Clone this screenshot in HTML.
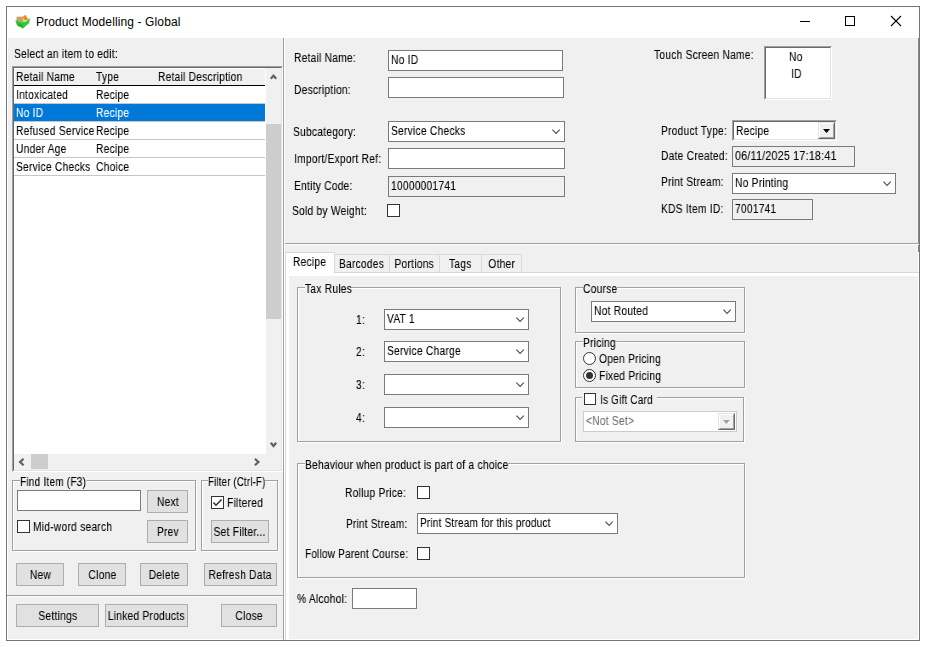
<!DOCTYPE html>
<html><head><meta charset="utf-8"><style>
html,body{margin:0;padding:0;background:#fff;width:926px;height:647px;overflow:hidden}
body{position:relative;font-family:"Liberation Sans",sans-serif}
.a{position:absolute;box-sizing:border-box}
.t{position:absolute;font-size:12px;line-height:14px;white-space:pre;transform:scaleX(0.85);letter-spacing:0.3px;transform-origin:0 0;will-change:transform;-webkit-text-stroke:0.1px currentColor}
.tc{position:absolute;font-size:12px;line-height:14px;white-space:pre;text-align:center}
.tc i{font-style:normal;display:inline-block;transform:scaleX(0.85);letter-spacing:0.3px;will-change:transform;-webkit-text-stroke:0.1px currentColor}
</style></head><body>

<div class="a" style="left:6px;top:6px;width:914px;height:635px;border:1px solid #777;background:#fff"></div>
<div class="a" style="left:8px;top:38px;width:910px;height:601px;background:#f0f0f0"></div>
<div class="a" style="left:918px;top:38px;width:1px;height:206px;background:#8a8a8a"></div>
<div class="a" style="left:918px;top:245px;width:1px;height:7px;background:#8a8a8a"></div>
<svg class="a" style="left:12px;top:12px" width="22" height="20" viewBox="0 0 22 20"><path d="M4.5 4.8 L11 4.6 L11.8 10.5 L4.5 9 Z" fill="#c9a36a"/><path d="M11 4.8 L13.5 2.8 L15 5.5 L16.5 7 L14 8.8 L11.5 7.5 Z" fill="#f28a12"/><path d="M11.5 8 L14 8.5 L14 10.5 L12 10.5 Z" fill="#d8e4f0"/><path d="M3.3 8.2 L10.8 10.2 L14 9.5 L18 6 L17.2 11 L11 16.5 L5 13.5 Z" fill="#2fcc3a"/><path d="M5 10.5 L10.5 12.5 L11 16 L6 13.5 Z" fill="#28b030"/></svg>
<span class="a" style="left:36px;top:15px;font-size:12px;line-height:14px;letter-spacing:0.12px;white-space:pre;color:#000">Product Modelling - Global</span>
<div class="a" style="left:800px;top:21px;width:10px;height:1px;background:#000"></div>
<div class="a" style="left:845px;top:16px;width:10px;height:10px;border:1px solid #000"></div>
<svg class="a" style="left:890px;top:15px" width="12" height="12"><path d="M1 1 L11 11 M11 1 L1 11" stroke="#000" stroke-width="1.1"/></svg>
<span class="t" style="left:14px;top:47px;color:#000;">Select an item to edit:</span>
<div class="a" style="left:12px;top:66px;width:271px;height:406px;background:#fff;border-top:1px solid #a0a0a0;border-left:1px solid #a0a0a0;border-right:1px solid #fff;border-bottom:1px solid #fff"></div>
<div class="a" style="left:13px;top:67px;width:269px;height:404px;border-top:1px solid #696969;border-left:1px solid #696969;border-right:1px solid #e3e3e3;border-bottom:1px solid #e3e3e3"></div>
<div class="a" style="left:14px;top:68px;width:251px;height:17px;background:#f0f0f0;border-left:1px solid #fff;border-top:1px solid #fff"></div>
<div class="a" style="left:14px;top:85px;width:251px;height:1px;background:#000"></div>
<div class="a" style="left:265px;top:68px;width:1px;height:18px;background:#fff"></div>
<span class="t" style="left:16px;top:70px;color:#000;">Retail Name</span>
<span class="t" style="left:96px;top:70px;color:#000;">Type</span>
<span class="t" style="left:158px;top:70px;color:#000;">Retail Description</span>
<div class="a" style="left:14px;top:103px;width:251px;height:1px;background:#c6c6c6"></div>
<div class="a" style="left:14px;top:84px;width:80px;height:18px;overflow:hidden"><span class="t" style="left:2px;top:4px;color:#000">Intoxicated</span></div>
<span class="t" style="left:96px;top:88px;color:#000;">Recipe</span>
<div class="a" style="left:14px;top:104px;width:251px;height:17px;background:#0078d7"></div>
<div class="a" style="left:14px;top:121px;width:251px;height:1px;background:#c6c6c6"></div>
<div class="a" style="left:14px;top:102px;width:80px;height:18px;overflow:hidden"><span class="t" style="left:2px;top:4px;color:#fff">No ID</span></div>
<span class="t" style="left:96px;top:106px;color:#fff;">Recipe</span>
<div class="a" style="left:14px;top:139px;width:251px;height:1px;background:#c6c6c6"></div>
<div class="a" style="left:14px;top:120px;width:80px;height:18px;overflow:hidden"><span class="t" style="left:2px;top:4px;color:#000">Refused Service</span></div>
<span class="t" style="left:96px;top:124px;color:#000;">Recipe</span>
<div class="a" style="left:14px;top:157px;width:251px;height:1px;background:#c6c6c6"></div>
<div class="a" style="left:14px;top:138px;width:80px;height:18px;overflow:hidden"><span class="t" style="left:2px;top:4px;color:#000">Under Age</span></div>
<span class="t" style="left:96px;top:142px;color:#000;">Recipe</span>
<div class="a" style="left:14px;top:175px;width:251px;height:1px;background:#c6c6c6"></div>
<div class="a" style="left:14px;top:156px;width:80px;height:18px;overflow:hidden"><span class="t" style="left:2px;top:4px;color:#000">Service Checks</span></div>
<span class="t" style="left:96px;top:160px;color:#000;">Choice</span>
<div class="a" style="left:266px;top:68px;width:15px;height:386px;background:#f0f0f0"></div>
<div class="a" style="left:266px;top:124px;width:15px;height:195px;background:#cdcdcd"></div>
<svg class="a" style="left:269px;top:73px" width="10" height="8"><path d="M1.8 5.8 L4.5 2.6 L7.2 5.8" fill="none" stroke="#606060" stroke-width="2.2"/></svg>
<svg class="a" style="left:269px;top:441px" width="10" height="8"><path d="M1.8 1.8 L4.5 5 L7.2 1.8" fill="none" stroke="#606060" stroke-width="2.2"/></svg>
<div class="a" style="left:14px;top:454px;width:267px;height:16px;background:#f0f0f0"></div>
<div class="a" style="left:31px;top:454px;width:17px;height:15px;background:#cdcdcd"></div>
<svg class="a" style="left:18px;top:457px" width="8" height="10"><path d="M5.6 1.8 L2.1 5 L5.6 8.2" fill="none" stroke="#606060" stroke-width="2.2"/></svg>
<svg class="a" style="left:253px;top:457px" width="8" height="10"><path d="M1.9 1.8 L5.4 5 L1.9 8.2" fill="none" stroke="#606060" stroke-width="2.2"/></svg>
<div class="a" style="left:13px;top:481px;width:184px;height:71px;border:1px solid #fff"></div>
<div class="a" style="left:12px;top:480px;width:184px;height:71px;border:1px solid #a0a0a0"></div>
<span class="t" style="left:20px;top:475px;color:#000;background:#f0f0f0;transform:scaleX(0.831)">Find Item (F3)</span>
<div class="a" style="left:17px;top:490px;width:124px;height:21px;background:#fff;border:1px solid #7a7a7a"></div>
<div class="a" style="left:17px;top:520px;width:13px;height:13px;background:#fff;border:1px solid #333"></div>
<span class="t" style="left:33px;top:520px;color:#000;">Mid-word search</span>
<div class="a" style="left:147px;top:490px;width:41px;height:23px;background:#e1e1e1;border:1px solid #adadad"></div>
<span class="tc" style="left:107px;width:121px;top:495px;color:#000"><i>Next</i></span>
<div class="a" style="left:147px;top:520px;width:41px;height:23px;background:#e1e1e1;border:1px solid #adadad"></div>
<span class="tc" style="left:107px;width:121px;top:525px;color:#000"><i>Prev</i></span>
<div class="a" style="left:202px;top:481px;width:77px;height:71px;border:1px solid #fff"></div>
<div class="a" style="left:201px;top:480px;width:77px;height:71px;border:1px solid #a0a0a0"></div>
<span class="t" style="left:208px;top:475px;color:#000;background:#f0f0f0;transform:scaleX(0.793)">Filter (Ctrl-F)</span>
<div class="a" style="left:211px;top:496px;width:13px;height:13px;background:#fff;border:1px solid #333"></div>
<svg class="a" style="left:211px;top:496px" width="13" height="13"><path d="M2.5 6.5 L5 9.2 L10.5 3.5" fill="none" stroke="#333" stroke-width="1.6"/></svg>
<span class="t" style="left:227px;top:496px;color:#000;">Filtered</span>
<div class="a" style="left:211px;top:520px;width:58px;height:23px;background:#e1e1e1;border:1px solid #adadad"></div>
<span class="tc" style="left:171px;width:138px;top:525px;color:#000"><i>Set Filter...</i></span>
<div class="a" style="left:16px;top:563px;width:48px;height:23px;background:#e1e1e1;border:1px solid #adadad"></div>
<span class="tc" style="left:-24px;width:128px;top:568px;color:#000"><i>New</i></span>
<div class="a" style="left:78px;top:563px;width:48px;height:23px;background:#e1e1e1;border:1px solid #adadad"></div>
<span class="tc" style="left:38px;width:128px;top:568px;color:#000"><i>Clone</i></span>
<div class="a" style="left:140px;top:563px;width:48px;height:23px;background:#e1e1e1;border:1px solid #adadad"></div>
<span class="tc" style="left:100px;width:128px;top:568px;color:#000"><i>Delete</i></span>
<div class="a" style="left:204px;top:563px;width:73px;height:23px;background:#e1e1e1;border:1px solid #adadad"></div>
<span class="tc" style="left:164px;width:153px;top:568px;color:#000"><i>Refresh Data</i></span>
<div class="a" style="left:7px;top:595px;width:277px;height:1px;background:#a0a0a0"></div>
<div class="a" style="left:7px;top:596px;width:277px;height:1px;background:#fff"></div>
<div class="a" style="left:16px;top:604px;width:83px;height:23px;background:#e1e1e1;border:1px solid #adadad"></div>
<span class="tc" style="left:-24px;width:163px;top:609px;color:#000"><i>Settings</i></span>
<div class="a" style="left:105px;top:604px;width:83px;height:23px;background:#e1e1e1;border:1px solid #adadad"></div>
<span class="tc" style="left:65px;width:163px;top:609px;color:#000"><i>Linked Products</i></span>
<div class="a" style="left:221px;top:604px;width:56px;height:23px;background:#e1e1e1;border:1px solid #adadad"></div>
<span class="tc" style="left:181px;width:136px;top:609px;color:#000"><i>Close</i></span>
<div class="a" style="left:283px;top:38px;width:1px;height:602px;background:#a0a0a0"></div>
<div class="a" style="left:284px;top:38px;width:1px;height:602px;background:#fff"></div>
<span class="t" style="left:294px;top:51px;color:#000;">Retail Name:</span>
<div class="a" style="left:388px;top:50px;width:175px;height:21px;background:#fff;border:1px solid #7a7a7a"></div>
<span class="t" style="left:391px;top:53px;color:#000;">No ID</span>
<span class="t" style="left:294px;top:83px;color:#000;">Description:</span>
<div class="a" style="left:388px;top:77px;width:176px;height:21px;background:#fff;border:1px solid #7a7a7a"></div>
<span class="t" style="left:293px;top:125px;color:#000;">Subcategory:</span>
<div class="a" style="left:388px;top:121px;width:177px;height:21px;background:#fff;border:1px solid #7a7a7a"></div>
<svg class="a" style="left:551px;top:127px" width="11" height="9"><path d="M1.4 2.6 L5.1 6.4 L8.8 2.6" fill="none" stroke="#505050" stroke-width="1.15"/></svg>
<span class="t" style="left:391px;top:124px;color:#000;">Service Checks</span>
<span class="t" style="left:294px;top:152px;color:#000;">Import/Export Ref:</span>
<div class="a" style="left:388px;top:148px;width:177px;height:21px;background:#fff;border:1px solid #7a7a7a"></div>
<span class="t" style="left:294px;top:179px;color:#000;">Entity Code:</span>
<div class="a" style="left:388px;top:176px;width:177px;height:21px;background:#f0f0f0;border:1px solid #7a7a7a"></div>
<span class="t" style="left:391px;top:179px;color:#000;">10000001741</span>
<span class="t" style="left:292px;top:204px;color:#000;">Sold by Weight:</span>
<div class="a" style="left:387px;top:204px;width:13px;height:13px;background:#fff;border:1px solid #333"></div>
<span class="t" style="left:654px;top:48px;color:#000;">Touch Screen Name:</span>
<div class="a" style="left:764px;top:46px;width:68px;height:54px;background:#fff;border-top:1px solid #a0a0a0;border-left:1px solid #a0a0a0;border-right:1px solid #fff;border-bottom:1px solid #fff"></div>
<div class="a" style="left:765px;top:47px;width:66px;height:52px;border-top:1px solid #696969;border-left:1px solid #696969;border-right:1px solid #e3e3e3;border-bottom:1px solid #e3e3e3"></div>
<span class="t" style="left:789px;top:50px;color:#000;">No</span>
<span class="t" style="left:791px;top:67px;color:#000;">ID</span>
<span class="t" style="left:661px;top:124px;color:#000;">Product Type:</span>
<div class="a" style="left:732px;top:120px;width:105px;height:21px;background:#fff;border-top:1px solid #a0a0a0;border-left:1px solid #a0a0a0;border-right:1px solid #fff;border-bottom:1px solid #fff"></div>
<div class="a" style="left:733px;top:121px;width:103px;height:19px;border-top:1px solid #696969;border-left:1px solid #696969;border-right:1px solid #e3e3e3;border-bottom:1px solid #e3e3e3"></div>
<span class="t" style="left:736px;top:124px;color:#000;">Recipe</span>
<div class="a" style="left:818px;top:122px;width:17px;height:17px;background:#f0f0f0;border-top:1px solid #e3e3e3;border-left:1px solid #e3e3e3;border-right:1px solid #696969;border-bottom:1px solid #696969"></div>
<div class="a" style="left:819px;top:123px;width:15px;height:15px;border-top:1px solid #fff;border-left:1px solid #fff;border-right:1px solid #a0a0a0;border-bottom:1px solid #a0a0a0"></div>
<svg class="a" style="left:823px;top:129px" width="7" height="4"><path d="M0 0 H7 L3.5 4 Z" fill="#000"/></svg>
<span class="t" style="left:661px;top:149px;color:#000;">Date Created:</span>
<div class="a" style="left:732px;top:146px;width:123px;height:21px;background:#f0f0f0;border:1px solid #7a7a7a"></div>
<span class="t" style="left:735px;top:149px;color:#000;;transform:scaleX(0.885)">06/11/2025 17:18:41</span>
<span class="t" style="left:661px;top:175px;color:#000;">Print Stream:</span>
<div class="a" style="left:732px;top:173px;width:164px;height:21px;background:#fff;border:1px solid #7a7a7a"></div>
<svg class="a" style="left:882px;top:179px" width="11" height="9"><path d="M1.4 2.6 L5.1 6.4 L8.8 2.6" fill="none" stroke="#505050" stroke-width="1.15"/></svg>
<span class="t" style="left:735px;top:176px;color:#000;">No Printing</span>
<span class="t" style="left:661px;top:202px;color:#000;">KDS Item ID:</span>
<div class="a" style="left:732px;top:199px;width:81px;height:21px;background:#f0f0f0;border:1px solid #7a7a7a"></div>
<span class="t" style="left:735px;top:202px;color:#000;">7001741</span>
<div class="a" style="left:285px;top:243px;width:634px;height:1px;background:#a0a0a0"></div>
<div class="a" style="left:285px;top:244px;width:633px;height:1px;background:#fff"></div>
<div class="a" style="left:285px;top:272px;width:634px;height:368px;background:#fff;border-top:1px solid #d9d9d9;border-left:1px solid #d9d9d9"></div>
<div class="a" style="left:289px;top:276px;width:629px;height:363px;background:#f0f0f0"></div>
<div class="a" style="left:334px;top:254px;width:56px;height:19px;background:#f0f0f0;border:1px solid #d9d9d9"></div>
<span class="tc" style="left:294px;width:136px;top:257px;color:#000"><i>Barcodes</i></span>
<div class="a" style="left:389px;top:254px;width:51px;height:19px;background:#f0f0f0;border:1px solid #d9d9d9"></div>
<span class="tc" style="left:349px;width:131px;top:257px;color:#000"><i>Portions</i></span>
<div class="a" style="left:439px;top:254px;width:43px;height:19px;background:#f0f0f0;border:1px solid #d9d9d9"></div>
<span class="tc" style="left:399px;width:123px;top:257px;color:#000"><i>Tags</i></span>
<div class="a" style="left:481px;top:254px;width:41px;height:19px;background:#f0f0f0;border:1px solid #d9d9d9"></div>
<span class="tc" style="left:441px;width:121px;top:257px;color:#000"><i>Other</i></span>
<div class="a" style="left:285px;top:252px;width:50px;height:21px;background:#fff;border:1px solid #d9d9d9;border-bottom:none"></div>
<span class="tc" style="left:245px;width:130px;top:255px;color:#000"><i>Recipe</i></span>
<div class="a" style="left:298px;top:288px;width:264px;height:155px;border:1px solid #fff"></div>
<div class="a" style="left:297px;top:287px;width:264px;height:155px;border:1px solid #a0a0a0"></div>
<span class="t" style="left:305px;top:282px;color:#000;background:#f0f0f0">Tax Rules</span>
<span class="t" style="left:356px;top:313px;color:#000;">1:</span>
<div class="a" style="left:384px;top:309px;width:145px;height:21px;background:#fff;border:1px solid #7a7a7a"></div>
<svg class="a" style="left:515px;top:315px" width="11" height="9"><path d="M1.4 2.6 L5.1 6.4 L8.8 2.6" fill="none" stroke="#505050" stroke-width="1.15"/></svg>
<span class="t" style="left:387px;top:312px;color:#000;">VAT 1</span>
<span class="t" style="left:356px;top:345px;color:#000;">2:</span>
<div class="a" style="left:384px;top:341px;width:145px;height:21px;background:#fff;border:1px solid #7a7a7a"></div>
<svg class="a" style="left:515px;top:347px" width="11" height="9"><path d="M1.4 2.6 L5.1 6.4 L8.8 2.6" fill="none" stroke="#505050" stroke-width="1.15"/></svg>
<span class="t" style="left:387px;top:344px;color:#000;">Service Charge</span>
<span class="t" style="left:356px;top:378px;color:#000;">3:</span>
<div class="a" style="left:384px;top:374px;width:145px;height:21px;background:#fff;border:1px solid #7a7a7a"></div>
<svg class="a" style="left:515px;top:380px" width="11" height="9"><path d="M1.4 2.6 L5.1 6.4 L8.8 2.6" fill="none" stroke="#505050" stroke-width="1.15"/></svg>
<span class="t" style="left:356px;top:411px;color:#000;">4:</span>
<div class="a" style="left:384px;top:407px;width:145px;height:21px;background:#fff;border:1px solid #7a7a7a"></div>
<svg class="a" style="left:515px;top:413px" width="11" height="9"><path d="M1.4 2.6 L5.1 6.4 L8.8 2.6" fill="none" stroke="#505050" stroke-width="1.15"/></svg>
<div class="a" style="left:576px;top:288px;width:170px;height:46px;border:1px solid #fff"></div>
<div class="a" style="left:575px;top:287px;width:170px;height:46px;border:1px solid #a0a0a0"></div>
<span class="t" style="left:583px;top:282px;color:#000;background:#f0f0f0">Course</span>
<div class="a" style="left:591px;top:301px;width:145px;height:21px;background:#fff;border:1px solid #7a7a7a"></div>
<svg class="a" style="left:722px;top:307px" width="11" height="9"><path d="M1.4 2.6 L5.1 6.4 L8.8 2.6" fill="none" stroke="#505050" stroke-width="1.15"/></svg>
<span class="t" style="left:594px;top:304px;color:#000;">Not Routed</span>
<div class="a" style="left:576px;top:342px;width:170px;height:47px;border:1px solid #fff"></div>
<div class="a" style="left:575px;top:341px;width:170px;height:47px;border:1px solid #a0a0a0"></div>
<span class="t" style="left:583px;top:336px;color:#000;background:#f0f0f0">Pricing</span>
<svg class="a" style="left:583px;top:352px" width="13" height="13"><circle cx="6.5" cy="6.5" r="6" fill="#fff" stroke="#333" stroke-width="1"/></svg>
<svg class="a" style="left:583px;top:369px" width="13" height="13"><circle cx="6.5" cy="6.5" r="6" fill="#fff" stroke="#333" stroke-width="1"/><circle cx="6.5" cy="6.5" r="3.5" fill="#333"/></svg>
<span class="t" style="left:599px;top:352px;color:#000;">Open Pricing</span>
<span class="t" style="left:599px;top:369px;color:#000;">Fixed Pricing</span>
<div class="a" style="left:576px;top:398px;width:169px;height:45px;border:1px solid #fff"></div>
<div class="a" style="left:575px;top:397px;width:169px;height:45px;border:1px solid #a0a0a0"></div>
<div class="a" style="left:582px;top:397px;width:75px;height:2px;background:#f0f0f0"></div>
<div class="a" style="left:584px;top:393px;width:12px;height:12px;background:#fff;border:1px solid #333"></div>
<span class="t" style="left:600px;top:393px;color:#000;;transform:scaleX(0.822)">Is Gift Card</span>
<div class="a" style="left:583px;top:411px;width:154px;height:21px;background:#fff;border:1px solid #cccccc"></div>
<span class="t" style="left:586px;top:414px;color:#6d6d6d;">&lt;Not Set&gt;</span>
<div class="a" style="left:718px;top:413px;width:17px;height:17px;background:#f0f0f0;border-top:1px solid #e3e3e3;border-left:1px solid #e3e3e3;border-right:1px solid #696969;border-bottom:1px solid #696969"></div>
<div class="a" style="left:719px;top:414px;width:15px;height:15px;border-top:1px solid #fff;border-left:1px solid #fff;border-right:1px solid #a0a0a0;border-bottom:1px solid #a0a0a0"></div>
<svg class="a" style="left:723px;top:420px" width="8" height="5"><path d="M1 1 H8 L4.5 5 Z" fill="#fff"/><path d="M0 0 H7 L3.5 4 Z" fill="#a0a0a0"/></svg>
<div class="a" style="left:298px;top:464px;width:448px;height:115px;border:1px solid #fff"></div>
<div class="a" style="left:297px;top:463px;width:448px;height:115px;border:1px solid #a0a0a0"></div>
<span class="t" style="left:305px;top:458px;color:#000;background:#f0f0f0">Behaviour when product is part of a choice</span>
<span class="t" style="left:345px;top:486px;color:#000;">Rollup Price:</span>
<div class="a" style="left:417px;top:486px;width:13px;height:13px;background:#fff;border:1px solid #333"></div>
<span class="t" style="left:346px;top:517px;color:#000;;transform:scaleX(0.831)">Print Stream:</span>
<div class="a" style="left:417px;top:513px;width:201px;height:21px;background:#fff;border:1px solid #7a7a7a"></div>
<svg class="a" style="left:604px;top:519px" width="11" height="9"><path d="M1.4 2.6 L5.1 6.4 L8.8 2.6" fill="none" stroke="#505050" stroke-width="1.15"/></svg>
<span class="t" style="left:420px;top:516px;color:#000;;transform:scaleX(0.826)">Print Stream for this product</span>
<span class="t" style="left:305px;top:547px;color:#000;;transform:scaleX(0.826)">Follow Parent Course:</span>
<div class="a" style="left:417px;top:547px;width:13px;height:13px;background:#fff;border:1px solid #333"></div>
<span class="t" style="left:297px;top:592px;color:#000;">% Alcohol:</span>
<div class="a" style="left:352px;top:588px;width:65px;height:21px;background:#fff;border:1px solid #7a7a7a"></div>
</body></html>
